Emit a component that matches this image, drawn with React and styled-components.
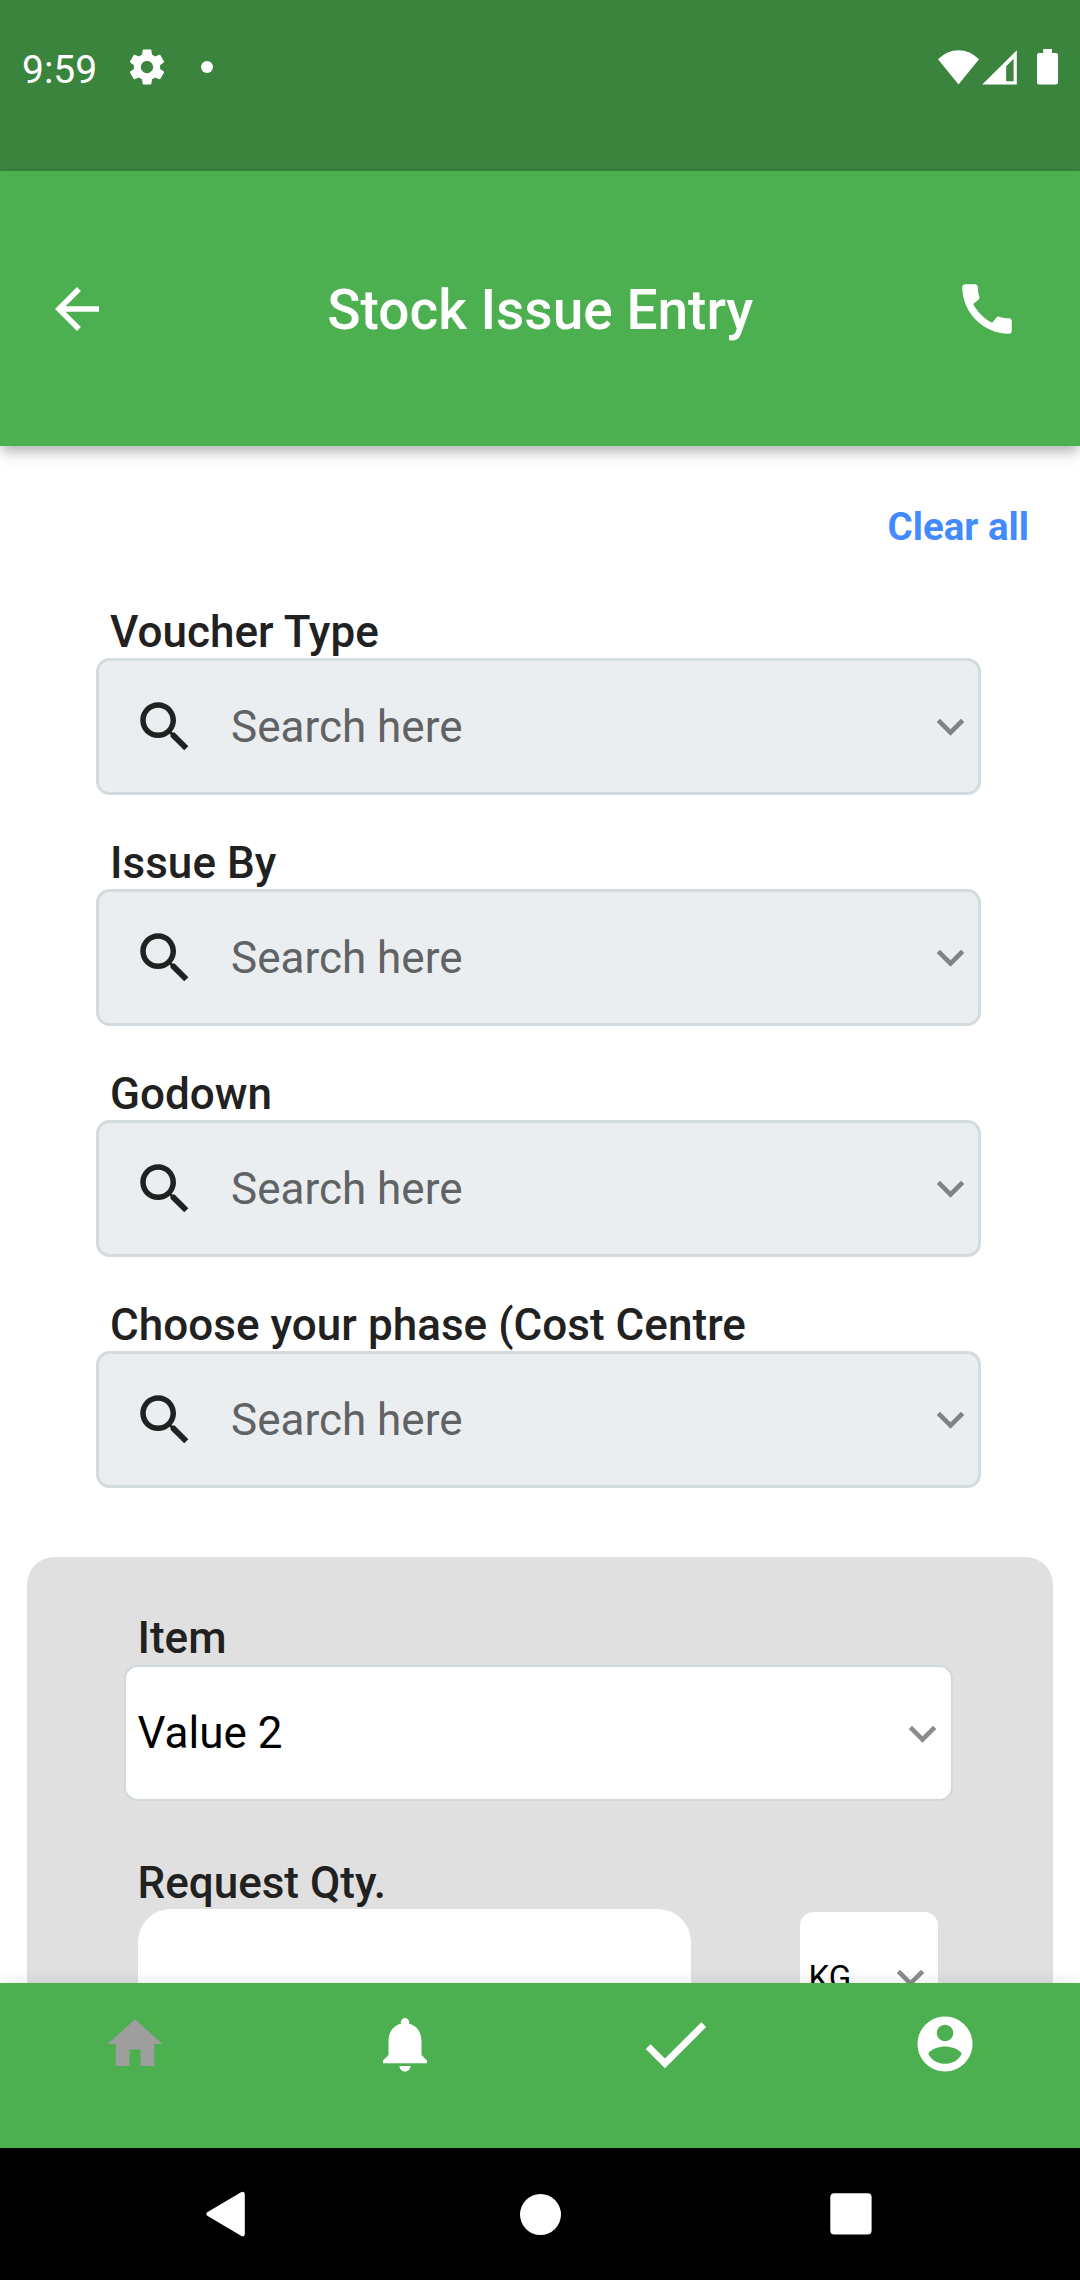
import React from "react";
import styled, { createGlobalStyle } from "styled-components";

const GlobalStyle = createGlobalStyle`
  * { box-sizing: border-box; }
  body { margin: 0; background: #fff; }
  svg { display: block; flex: none; }
`;

const Screen = styled.div`
  width: 1080px;
  height: 2280px;
  display: flex;
  flex-direction: column;
  overflow: hidden;
  background: #fff;
  font-family: Roboto, "Liberation Sans", sans-serif;
  color: #212121;
`;

const StatusBar = styled.div`
  height: 171px;
  flex: none;
  display: flex;
  justify-content: space-between;
  align-items: flex-start;
  padding: 42px 21px 0 22px;
  background: #3b843e;
  color: #fff;
`;

const StatusGroup = styled.div`
  display: flex;
  align-items: center;
  height: 50px;
`;

const Clock = styled.span`
  width: 103.5px;
  padding-top: 5px;
  font-size: 39px;
  line-height: 50px;
`;

const NotificationDot = styled.span`
  width: 12px;
  height: 12px;
  margin-left: 33.5px;
  border-radius: 50%;
  background: #fff;
`;

const AppBar = styled.header`
  position: relative;
  z-index: 1;
  height: 275px;
  flex: none;
  display: grid;
  grid-template-columns: 1fr auto 1fr;
  align-items: center;
  padding: 0 60.5px 0 44px;
  background: #4caf50;
  color: #fff;
  box-shadow: 0 5.5px 11px -2.75px rgba(0, 0, 0, 0.18),
    0 9px 13.75px rgba(0, 0, 0, 0.12), 0 2.75px 14px rgba(0, 0, 0, 0.06);
`;

const Title = styled.h1`
  margin: 0 -8.5px 0 8.5px;
  padding-top: 2px;
  font-size: 55px;
  line-height: 64px;
  font-weight: 500;
  white-space: nowrap;
`;

const BarButton = styled.button`
  justify-self: ${(p) => (p.$end ? "end" : "start")};
  padding: 0;
  border: 0;
  background: none;
  color: inherit;
`;

const Content = styled.main`
  flex: 1;
  min-height: 0;
  overflow: hidden;
  display: flex;
  flex-direction: column;
  padding-top: 58px;
`;

const ClearAll = styled.button`
  align-self: flex-end;
  flex: none;
  margin: 0 51px 56px 0;
  padding: 0;
  border: 0;
  background: none;
  font: 700 38.5px/46px Roboto, sans-serif;
  color: #448aff;
`;

const Fields = styled.section`
  flex: none;
  display: flex;
  flex-direction: column;
  gap: 42px;
  padding: 0 99px 0 96px;
`;

const Field = styled.div`
  display: flex;
  flex-direction: column;
`;

const Label = styled.label`
  height: 52px;
  padding-left: ${(p) => (p.$inCard ? "13.5px" : "14px")};
  font-size: 44px;
  line-height: 52px;
  font-weight: 500;
  letter-spacing: ${(p) => (p.$inCard ? "0" : "0.04px")};
  white-space: nowrap;
`;

const SelectBox = styled.div`
  height: 137px;
  display: flex;
  align-items: center;
  padding: 0 0 0 33px;
  border: 3px solid #d2dbdf;
  border-radius: 13.75px;
  background: #eaeef1;
`;

const Placeholder = styled.span`
  flex: 1;
  margin-left: 33px;
  font-size: 44px;
  line-height: 52px;
  color: #616263;
`;

const ItemCard = styled.section`
  flex: none;
  height: 700px;
  margin: 69px 27.5px 0 27px;
  padding: 55px 99.5px 0 97px;
  border-radius: 27.5px;
  background: #e0e0e0;
`;

const ItemSelect = styled(SelectBox)`
  height: 136px;
  margin-top: 1px;
  padding: 0 1px 0 11.5px;
  border: 2px solid #cfd8dc;
  background: #fff;
`;

const ItemValue = styled.span`
  flex: 1;
  font-size: 44px;
  line-height: 52px;
  color: #000;
`;

const QtyBlock = styled.div`
  margin-top: 56px;
`;

const QtyRow = styled.div`
  display: flex;
  justify-content: space-between;
  padding: 0 12.5px 0 13.5px;
`;

const QtyInput = styled.div`
  width: 553px;
  height: 137px;
  border-radius: 33px;
  background: #fff;
`;

const UnitSelect = styled.div`
  width: 144px;
  height: 137px;
  display: flex;
  align-items: center;
  justify-content: space-between;
  padding: 0 0 0 9px;
  border: 3px solid #e0e0e0;
  border-radius: 16px;
  background: #fff;
  background-clip: padding-box;
  font-size: 33px;
  line-height: 40px;
  color: #000;
`;

const TabBar = styled.nav`
  position: relative;
  z-index: 1;
  height: 165px;
  flex: none;
  display: grid;
  grid-template-columns: repeat(4, 1fr);
  background: #4caf50;
  box-shadow: 0 -1px 14px rgba(0, 0, 0, 0.1);
`;

const Tab = styled.button`
  height: 122px;
  display: flex;
  align-items: center;
  justify-content: center;
  padding: 0;
  border: 0;
  background: none;
  color: ${(p) => (p.$active ? "#9e9e9e" : "#fff")};
`;

const SystemNav = styled.div`
  height: 132px;
  flex: none;
  display: flex;
  align-items: center;
  justify-content: space-between;
  padding: 0 208px 0 205px;
  background: #000;
`;

const HomeCircle = styled.span`
  width: 41px;
  height: 41px;
  margin-left: 5px;
  border-radius: 50%;
  background: #fff;
`;

const icons = {
  settings:
    "M19.43 12.98c.04-.32.07-.64.07-.98s-.03-.66-.07-.98l2.11-1.65c.19-.15.24-.42.12-.64l-2-3.46c-.12-.22-.39-.3-.61-.22l-2.49 1c-.52-.4-1.08-.73-1.69-.98l-.38-2.65C14.46 2.18 14.25 2 14 2h-4c-.25 0-.46.18-.49.42l-.38 2.65c-.61.25-1.17.59-1.69.98l-2.49-1c-.23-.09-.49 0-.61.22l-2 3.46c-.13.22-.07.49.12.64l2.11 1.65c-.04.32-.07.65-.07.98s.03.66.07.98l-2.11 1.65c-.19.15-.24.42-.12.64l2 3.46c.12.22.39.3.61.22l2.49-1c.52.4 1.08.73 1.69.98l.38 2.65c.03.24.24.42.49.42h4c.25 0 .46-.18.49-.42l.38-2.65c.61-.25 1.17-.59 1.69-.98l2.49 1c.23.09.49 0 .61-.22l2-3.46c.12-.22.07-.49-.12-.64l-2.11-1.65zM12 15.5c-1.93 0-3.5-1.57-3.5-3.5s1.57-3.5 3.5-3.5 3.5 1.57 3.5 3.5-1.57 3.5-3.5 3.5z",
  back: "M20 11H7.83l5.59-5.59L12 4l-8 8 8 8 1.41-1.41L7.83 13H20v-2z",
  phone:
    "M20.01 15.38c-1.23 0-2.42-.2-3.53-.56-.35-.12-.74-.03-1.01.24l-1.57 1.97c-2.83-1.35-5.48-3.9-6.89-6.83l1.95-1.66c.27-.28.35-.67.24-1.02-.37-1.11-.56-2.3-.56-3.53 0-.54-.45-.99-.99-.99H4.19C3.65 3 3 3.24 3 3.99 3 13.28 10.73 21 20.01 21c.71 0 .99-.63.99-1.18v-3.45c0-.54-.45-.99-.99-.99z",
  search:
    "M15.5 14h-.79l-.28-.27C15.41 12.59 16 11.11 16 9.5 16 5.91 13.09 3 9.5 3S3 5.91 3 9.5 5.91 16 9.5 16c1.61 0 3.09-.59 4.23-1.57l.27.28v.79l5 4.99L20.49 19l-4.99-5zm-6 0C7.01 14 5 11.99 5 9.5S7.01 5 9.5 5 14 7.01 14 9.5 11.99 14 9.5 14z",
  down: "M7.41 8.59L12 13.17l4.59-4.58L18 10l-6 6-6-6 1.41-1.41z",
  home: "M10 20v-6h4v6h5v-8h3L12 3 2 12h3v8z",
  bell: "M12 22c1.1 0 2-.9 2-2h-4c0 1.1.89 2 2 2zm6-6v-5c0-3.07-1.64-5.64-4.5-6.32V4c0-.83-.67-1.5-1.5-1.5s-1.5.67-1.5 1.5v.68C7.63 5.36 6 7.92 6 11v5l-2 2v1h16v-1l-2-2z",
  check: "M9 16.17L4.83 12l-1.42 1.41L9 19 21 7l-1.41-1.41z",
  account:
    "M12 2C6.480 2 2 6.480 2 12s4.480 10 10 10 10-4.480 10-10S17.520 2 12 2zm0 3c1.660 0 3 1.340 3 3s-1.340 3-3 3-3-1.340-3-3 1.340-3 3-3zm0 7.900c-2.200 0-4.500.8-5.700 2.050q-.5.550-.1 1.100C7.500 18.050 9.600 19.200 12 19.200s4.500-1.150 5.800-3.150q.4-.55-.1-1.100C16.500 13.700 14.200 12.900 12 12.900z",
};

const Icon = ({ name, size = 66, color = "currentColor" }) => (
  <svg width={size} height={size} viewBox="0 0 24 24" fill={color}>
    <path fillRule="evenodd" d={icons[name]} />
  </svg>
);

const Chevron = () => <Icon name="down" size={55} color="rgba(0,0,0,0.45)" />;

const StatusIcons = () => (
  <svg width="121" height="36" viewBox="938 49 121 36" fill="#fff">
    <path d="M958.5 84.5 938 59.3Q947 50.2 958.5 50.2T979 59.3Z" />
    <path
      fillRule="evenodd"
      d="M1016.8 50.3V84.6H982.3ZM1013.6 58.8 1006.2 66.2V81.2H1013.6Z"
    />
    <path d="M1043.2 49h8.8v4h4q2 0 2 2v27.600q0 2-2 2h-17q-2 0-2-2V55q0-2 2-2h4.200z" />
  </svg>
);

const searchFields = [
  "Voucher Type",
  "Issue By",
  "Godown",
  "Choose your phase (Cost Centre",
];

const tabs = [
  { icon: "home", active: true },
  { icon: "bell" },
  { icon: "check", size: 82.5 },
  { icon: "account" },
];

export default function App() {
  return (
    <Screen>
      <GlobalStyle />
      <StatusBar>
        <StatusGroup>
          <Clock>9:59</Clock>
          <Icon name="settings" size={42} />
          <NotificationDot />
        </StatusGroup>
        <StatusGroup>
          <StatusIcons />
        </StatusGroup>
      </StatusBar>
      <AppBar>
        <BarButton aria-label="Back">
          <Icon name="back" />
        </BarButton>
        <Title>Stock Issue Entry</Title>
        <BarButton $end aria-label="Call">
          <Icon name="phone" />
        </BarButton>
      </AppBar>
      <Content>
        <ClearAll>Clear all</ClearAll>
        <Fields>
          {searchFields.map((label) => (
            <Field key={label}>
              <Label>{label}</Label>
              <SelectBox>
                <Icon name="search" color="#202121" />
                <Placeholder>Search here</Placeholder>
                <Chevron />
              </SelectBox>
            </Field>
          ))}
        </Fields>
        <ItemCard>
          <Field>
            <Label $inCard>Item</Label>
            <ItemSelect>
              <ItemValue>Value 2</ItemValue>
              <Chevron />
            </ItemSelect>
          </Field>
          <QtyBlock>
            <Field>
              <Label $inCard>Request Qty.</Label>
              <QtyRow>
                <QtyInput />
                <UnitSelect>
                  KG
                  <Chevron />
                </UnitSelect>
              </QtyRow>
            </Field>
          </QtyBlock>
        </ItemCard>
      </Content>
      <TabBar>
        {tabs.map((t) => (
          <Tab key={t.icon} $active={t.active} aria-label={t.icon}>
            <Icon name={t.icon} size={t.size} />
          </Tab>
        ))}
      </TabBar>
      <SystemNav>
        <svg width="40" height="46" viewBox="0 0 40 46" fill="#fff">
          <path d="M36 1.300Q39.800-.5 39.800 3.500V42.500Q39.800 46.500 36 44.700L2.300 24.800Q.3 23 2.300 21.200Z" />
        </svg>
        <HomeCircle />
        <svg width="42" height="42" viewBox="0 0 42 42" fill="#fff">
          <rect x=".3" y=".3" width="41.300" height="41.300" rx="4" />
        </svg>
      </SystemNav>
    </Screen>
  );
}
